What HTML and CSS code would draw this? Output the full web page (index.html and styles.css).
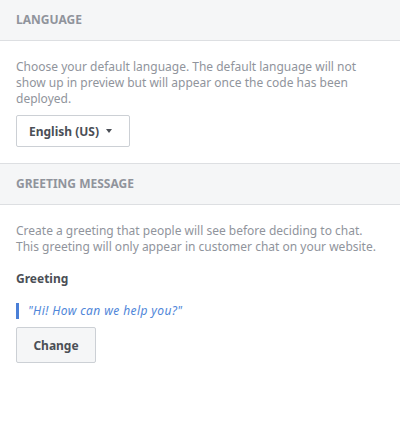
FILE: index.html
```html
<!DOCTYPE html>
<html>
<head>
<meta charset="utf-8">
<link rel="stylesheet" href="styles.css">
</head>
<body>
<div class="panel">
  <div class="section-head">Language</div>
  <div class="section-body">
    <p class="desc">Choose your default language. The default language will not show up in preview but will appear once the code has been deployed.</p>
    <button class="dropdown">English (US)<span class="caret"></span></button>
  </div>
  <div class="section-head">Greeting Message</div>
  <div class="section-body">
    <p class="desc">Create a greeting that people will see before deciding to chat. This greeting will only appear in customer chat on your website.</p>
    <div class="label">Greeting</div>
    <div class="quote">"Hi! How can we help you?"</div>
    <button class="btn">Change</button>
  </div>
</div>
</body>
</html>
```
FILE: styles.css
```css
html, body {
  margin: 0;
  padding: 0;
  background: #fff;
}
body {
  font-family: "Noto Sans", "Liberation Sans", Arial, sans-serif;
  font-size: 12px;
  line-height: 16px;
  color: #90949c;
}
.panel {
  width: 400px;
}
.section-head {
  background: #f5f6f7;
  border-bottom: 1px solid #dddfe2;
  height: 41px;
  box-sizing: border-box;
  padding: 12px 16px 0;
  line-height: 16px;
  font-weight: bold;
  font-size: 12px;
  text-transform: uppercase;
  color: #90949c;
}
.section-body + .section-head {
  border-top: 1px solid #dddfe2;
  height: 42px;
}
.section-body {
  padding: 18px 16px 16px;
}
.desc {
  margin: 0;
}
.dropdown {
  margin-top: 8px;
  display: inline-flex;
  align-items: center;
  height: 32px;
  box-sizing: border-box;
  padding: 0 17px 0 12px;
  background: #fff;
  border: 1px solid #ccd0d5;
  border-radius: 2px;
  font-family: inherit;
  font-size: 12px;
  font-weight: bold;
  color: #4b4f56;
}
.caret {
  margin-left: 7px;
  width: 0;
  height: 0;
  border-left: 3.5px solid transparent;
  border-right: 3.5px solid transparent;
  border-top: 4px solid #4b4f56;
}
.label {
  margin-top: 16px;
  font-weight: bold;
  color: #4b4f56;
}
.quote {
  margin-top: 16px;
  border-left: 3px solid #4a7fd7;
  padding-left: 9px;
  font-style: italic;
  letter-spacing: 0.4px;
  color: #4f86d9;
}
.btn {
  display: block;
  margin-top: 8px;
  width: 80px;
  height: 36px;
  background: #f5f6f7;
  border: 1px solid #ccd0d5;
  border-radius: 2px;
  font-family: inherit;
  font-size: 12px;
  font-weight: bold;
  color: #4b4f56;
  padding: 0;
}
```
